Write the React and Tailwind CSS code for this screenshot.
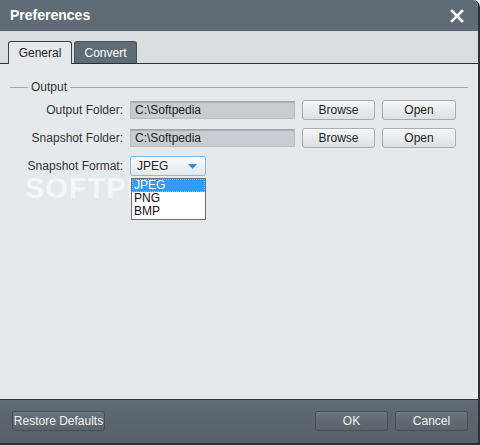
import React from 'react';

const font = { fontFamily: '"Liberation Sans", Arial, sans-serif' };

function LightButton({ children, className = '' }) {
  return (
    <button
      className={`h-[20px] rounded-[3px] border border-[#a7acb1] bg-gradient-to-b from-[#f5f6f7] to-[#dde0e3] text-[12px] text-[#1e1e1e] shadow-[inset_0_1px_0_#ffffff] ${className}`}
    >
      {children}
    </button>
  );
}

function DarkButton({ children, className = '' }) {
  return (
    <button
      className={`h-[20px] rounded-[3px] border border-[#464f57] bg-gradient-to-b from-[#68737d] to-[#5a646d] text-[12px] text-[#f2f2f2] shadow-[inset_0_1px_0_#79848e] ${className}`}
    >
      {children}
    </button>
  );
}

function FolderRow({ label, value }) {
  return (
    <div className="flex items-center h-[20px]">
      <span className="w-[113px] text-right text-[12px] text-[#333]">{label}</span>
      <div className="ml-[7px] w-[165px] h-[18px] flex items-center pl-[4px] bg-[#c9cdd1] border border-[#b7bcc1] border-t-[#9fa4a9] shadow-[inset_0_1px_1px_#a9aeb3] text-[12px] text-[#222]">
        {value}
      </div>
      <LightButton className="ml-[7px] w-[73px]">Browse</LightButton>
      <LightButton className="ml-[7px] w-[74px]">Open</LightButton>
    </div>
  );
}

export default function App() {
  return (
    <div
      style={font}
      className="w-[480px] h-[445px] flex flex-col overflow-hidden rounded-tr-[7px] border-r-2 border-b-2 border-[#2c3237] bg-[#e6e9ec]"
    >
      {/* Title bar */}
      <div className="h-[31px] shrink-0 flex items-center justify-between pl-[10px] pr-[14px] bg-[#5f6b75]">
        <span className="text-[14px] font-bold text-white">Preferences</span>
        <svg width="14" height="14" viewBox="0 0 14 14">
          <path d="M2 2 L12 12 M12 2 L2 12" stroke="#ffffff" strokeWidth="2.6" strokeLinecap="square" />
        </svg>
      </div>

      {/* Tabs */}
      <div className="h-[33px] shrink-0 flex items-end pl-[8px] gap-[2px] bg-[#d9dde0] border-b border-[#1d3142]">
        <div className="w-[64px] h-[23px] -mb-px flex items-center justify-center rounded-t-[3px] border border-b-0 border-[#34414c] bg-[#e6e9ec] text-[12px] text-[#222]">
          General
        </div>
        <div className="w-[63px] h-[22px] flex items-center justify-center rounded-t-[3px] border border-b-0 border-[#46515b] bg-[#5f6b75] text-[12px] text-white">
          Convert
        </div>
      </div>

      {/* Content */}
      <div className="relative flex-1 px-[10px] pt-[16px]">
        <div className="flex items-center h-[14px]">
          <div className="w-[18px] h-px bg-[#a3a8ad]" />
          <span className="px-[3px] text-[12px] text-[#333]">Output</span>
          <div className="flex-1 h-px bg-[#a3a8ad]" />
        </div>

        <div className="mt-[6px] flex flex-col gap-[8px]">
          <FolderRow label="Output Folder:" value="C:\Softpedia" />
          <FolderRow label="Snapshot Folder:" value="C:\Softpedia" />
          <div className="flex items-center h-[20px]">
            <span className="w-[113px] text-right text-[12px] text-[#333]">Snapshot Format:</span>
            <div className="ml-[7px] w-[76px] h-[20px] flex items-center justify-between pl-[6px] pr-[8px] rounded-[3px] border border-[#86b8e8] bg-gradient-to-b from-[#fbfcfd] to-[#e4e8ec] text-[12px] text-[#222]">
              <span>JPEG</span>
              <svg width="9" height="5" viewBox="0 0 9 5">
                <path d="M0 0 H9 L4.5 5 Z" fill="#2f8be0" />
              </svg>
            </div>
          </div>
        </div>

        {/* Watermark */}
        <div className="absolute left-[25px] top-[110px] pointer-events-none select-none flex items-start">
          <span className="text-[29px] font-bold tracking-[1px] text-white/60 leading-none">SOFTPEDIA</span>
          <span className="text-[9px] text-white/60 ml-[1px]">®</span>
        </div>

        {/* Open dropdown list */}
        <div className="absolute left-[131px] top-[114px] w-[75px] border border-[#6b6f73] bg-white text-[12px] text-[#111]">
          <div className="h-[13px] leading-[13px] pl-[2px] bg-[#3399ff] text-white outline outline-1 outline-dotted outline-[#f0a060] -outline-offset-1">
            JPEG
          </div>
          <div className="h-[13px] leading-[13px] pl-[2px]">PNG</div>
          <div className="h-[13px] leading-[13px] pl-[2px] mb-[1px]">BMP</div>
        </div>
      </div>

      {/* Footer */}
      <div className="h-[44px] shrink-0 flex items-center justify-between pl-[12px] pr-[10px] pb-[2px] border-t border-[#30383f] bg-gradient-to-b from-[#5e6a74] to-[#56616a]">
        <DarkButton className="w-[93px]">Restore Defaults</DarkButton>
        <div className="flex gap-[7px]">
          <DarkButton className="w-[73px]">OK</DarkButton>
          <DarkButton className="w-[73px]">Cancel</DarkButton>
        </div>
      </div>
    </div>
  );
}
